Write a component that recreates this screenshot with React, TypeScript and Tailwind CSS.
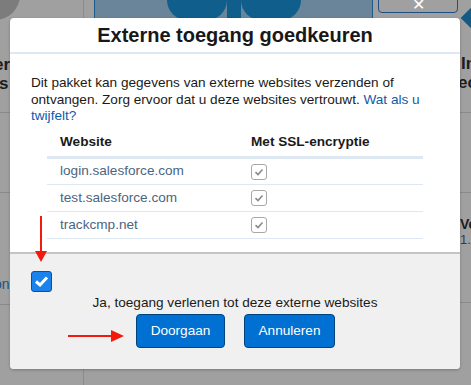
import React from 'react';

const sites = ['login.salesforce.com', 'test.salesforce.com', 'trackcmp.net'];

const SmallCheck = () => (
    <span className="flex h-[16px] w-[16px] items-center justify-center rounded-[3px] border border-[#a8a8a8] bg-white">
        <svg width="10" height="10" viewBox="0 0 10 10">
            <path d="M1.5 5.2 L4 7.5 L8.5 2.5" fill="none" stroke="#8a8a8a" strokeWidth="1.6" />
        </svg>
    </span>
);

// the dimmed page that sits behind the dialog
const Backdrop = () => (
    <div className="flex h-full">
        <div className="flex w-[84px] shrink-0 flex-col border-r border-[#8c8c8c]">
            <div className="h-[113px] border-b border-[#8a8a8a]">
                <div className="-ml-[30px] -mt-[30px] h-[50px] w-[50px] rounded-full bg-[#7c7c7c]" />
                <div className="-ml-[6px] mt-[35px] text-[17px] font-bold leading-[19px] text-[#1c1c1c]">
                    er<br /><span className="pl-[5px]">s</span>
                </div>
            </div>
            <div className="h-[80px] border-b border-[#8a8a8a]" />
            <div className="flex h-[112px] items-end border-b border-[#8a8a8a] pb-[9px]">
                <span className="-ml-[6px] text-[14px] text-[#20517f]">on</span>
            </div>
        </div>
        <div className="ml-[10px] flex h-[20px] w-[279px] shrink-0 justify-center overflow-hidden border-x border-[#1d5c8a] bg-[#6a8599]">
            <div className="-mt-[20px] h-[40px] w-[60px] rounded-full bg-[#0f5e8c]" />
            <div className="-mt-[10px] h-[30px] w-[14px] bg-[#0f5e8c]" />
            <div className="-mt-[20px] h-[40px] w-[60px] rounded-full bg-[#0f5e8c]" />
        </div>
        <div className="-mt-[4px] ml-[5px] flex h-[17px] w-[80px] shrink-0 items-center justify-center rounded-b-[4px] border border-[#1d4f85] text-[16px] text-white">
            ✕
        </div>
        <div className="ml-[2px] flex flex-1 flex-col">
            <div className="h-[113px] border-b border-[#8a8a8a]">
                <div className="ml-[4px] mt-[10px] h-[16px] w-[16px] rotate-45 bg-[#135b85]" />
                <div className="ml-[1px] mt-[28px] text-[17px] font-bold leading-[19px] text-[#1c1c1c]">
                    In<br /><span className="-ml-[3px]">ec</span>
                </div>
            </div>
            <div className="h-[80px] border-b border-[#8a8a8a]" />
            <div className="h-[110px] border-b border-[#8a8a8a] pt-[23px]">
                <div className="text-[14px] font-bold leading-[16px] text-[#1c1c1c]">Ve</div>
                <div className="text-[13px] leading-[16px] text-[#3a3a3a]">1.1</div>
            </div>
        </div>
    </div>
);

const App = () => {
    return (
        <div className="relative h-[385px] w-[471px] overflow-hidden bg-[#a0a0a0] font-['Liberation_Sans',Arial,sans-serif]">
            <Backdrop />

            {/* dialog */}
            <div className="absolute left-[10px] top-[18px] flex w-[450px] flex-col overflow-hidden rounded-[4px] bg-white shadow-[0_1px_3px_rgba(0,0,0,0.25)]">
                <div className="flex h-[36px] items-center justify-center border-b-2 border-[#dde8f3]">
                    <h2 className="text-[20px] font-bold text-[#181818]">Externe toegang goedkeuren</h2>
                </div>
                <div className="flex h-[198px] flex-col px-[21px] pt-[21px]">
                    <p className="text-[13.6px] leading-[16.5px] text-[#1a1a1a]">
                        Dit pakket kan gegevens van externe websites verzenden of ontvangen. Zorg ervoor dat u deze websites vertrouwt.{' '}
                        <span className="text-[#0b5cab]">Wat als u twijfelt?</span>
                    </p>
                    <table className="mx-[16px] mt-[3px] w-[376px] text-left text-[13.6px]">
                        <thead>
                            <tr className="h-[30px] border-b-[3px] border-[#dde8f3]">
                                <th className="pl-[13px] font-bold text-[#1a1a1a]">Website</th>
                                <th className="w-[172px] font-bold text-[#1a1a1a]">Met SSL-encryptie</th>
                            </tr>
                        </thead>
                        <tbody>
                            {sites.map((s) => (
                                <tr key={s} className="h-[27px] border-b border-[#dde8f3]">
                                    <td className="pl-[13px] text-[#4a6582]">{s}</td>
                                    <td><SmallCheck /></td>
                                </tr>
                            ))}
                        </tbody>
                    </table>
                </div>
                <div className="flex h-[117px] flex-col border-t-2 border-[#c4c4c4] bg-[#f0f0f0] px-[21px] pt-[17px]">
                    <span className="flex h-[21px] w-[21px] items-center justify-center rounded-[3px] border border-[#0d4f9c] bg-[#1b82ec]">
                        <svg width="15" height="13" viewBox="0 0 15 13">
                            <path d="M2 6.5 L6 10 L13 2.5" fill="none" stroke="white" strokeWidth="3" />
                        </svg>
                    </span>
                    <p className="mt-[3px] text-center text-[13.6px] leading-[16px] text-[#1a1a1a]">Ja, toegang verlenen tot deze externe websites</p>
                    <div className="mt-[3px] flex justify-center gap-[19px] pl-[1px]">
                        <button className="h-[34px] w-[89px] rounded-[4px] border border-[#00447f] bg-[#0070d2] text-[13.6px] text-white">Doorgaan</button>
                        <button className="h-[34px] w-[91px] rounded-[4px] border border-[#00447f] bg-[#0070d2] text-[13.6px] text-white">Annuleren</button>
                    </div>
                </div>
            </div>

            {/* red arrows */}
            <svg className="absolute left-0 top-0" width="471" height="385">
                <line x1="41" y1="216" x2="41" y2="252" stroke="#f21a0c" strokeWidth="2" />
                <polygon points="35,251 47,251 41,262" fill="#f21a0c" />
                <line x1="68" y1="336" x2="112" y2="336" stroke="#f21a0c" strokeWidth="2" />
                <polygon points="111,330 111,342 124,336" fill="#f21a0c" />
            </svg>
        </div>
    );
};

export default App;
